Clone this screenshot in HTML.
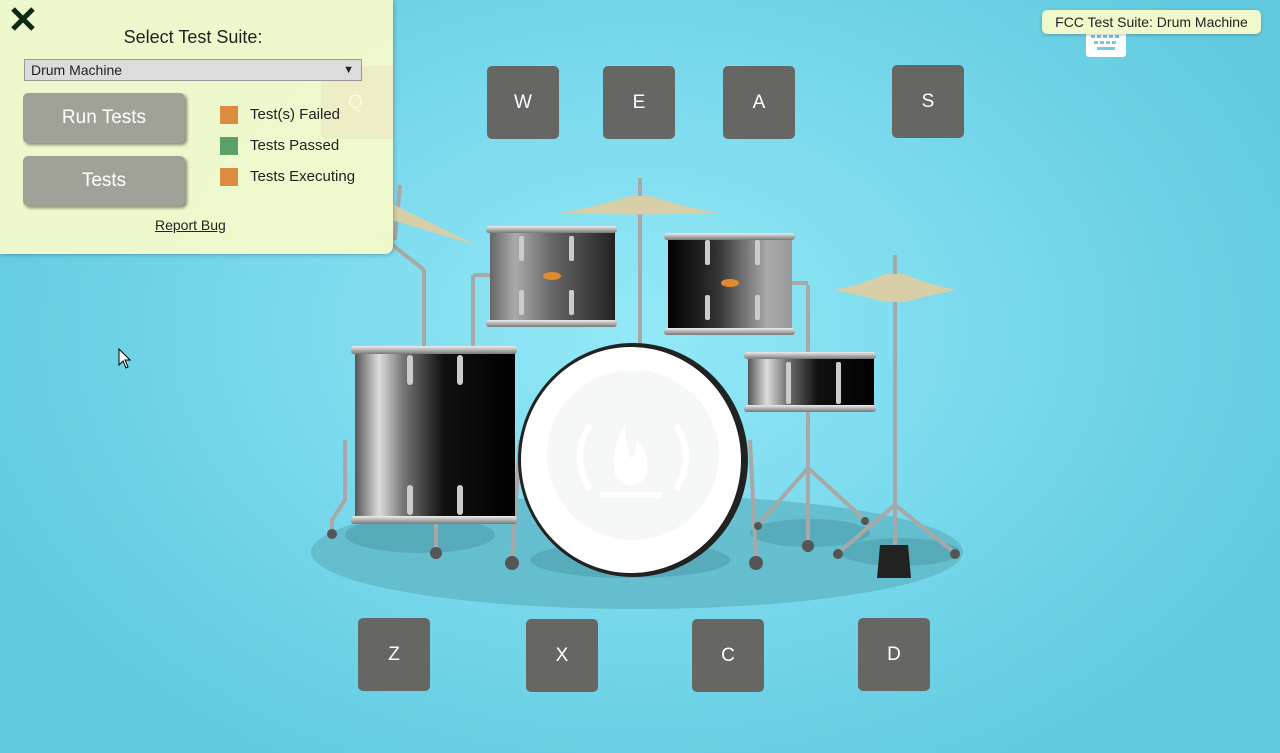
<!DOCTYPE html>
<html><head><meta charset="utf-8">
<style>
html,body{margin:0;padding:0;width:1280px;height:753px;overflow:hidden;font-family:"Liberation Sans",sans-serif;}
body{background:radial-gradient(ellipse 700px 500px at 640px 330px,#93e9f6 0%,#7ddbee 45%,#62cbe0 100%);position:relative;}
.key{position:absolute;width:72px;height:73px;background:#666664;border-radius:5px;color:#fff;font-size:19px;display:flex;align-items:center;justify-content:center;}
#panel{position:absolute;left:0;top:0;width:393px;height:254px;background:rgba(242,250,203,0.97);border-bottom-right-radius:8px;box-shadow:1px 1px 4px rgba(0,0,0,.25);overflow:hidden;}
.btn{position:absolute;left:23px;width:162px;height:50px;background:#a0a297;border-radius:5px;box-shadow:2px 2px 3px rgba(0,0,0,.45);color:#fff;font-size:19px;display:flex;align-items:center;justify-content:center;}
.leg{position:absolute;left:220px;font-size:15px;color:#222;}
.leg i{position:absolute;left:0;top:0;width:18px;height:18px;}
.leg span{position:absolute;left:30px;top:0;white-space:nowrap;}
</style></head><body>

<svg width="1280" height="753" style="position:absolute;left:0;top:0">
<defs>
<linearGradient id="sh" x1="0" x2="1">
<stop offset="0" stop-color="#555"/><stop offset=".15" stop-color="#ddd"/><stop offset=".3" stop-color="#777"/><stop offset=".55" stop-color="#111"/><stop offset="1" stop-color="#000"/></linearGradient>
<linearGradient id="sh2" x1="0" x2="1">
<stop offset="0" stop-color="#666"/><stop offset=".2" stop-color="#aaa"/><stop offset=".5" stop-color="#666"/><stop offset="1" stop-color="#222"/></linearGradient>
<linearGradient id="sh3" x1="0" x2="1">
<stop offset="0" stop-color="#000"/><stop offset=".4" stop-color="#333"/><stop offset=".8" stop-color="#aaa"/><stop offset="1" stop-color="#999"/></linearGradient>
<linearGradient id="rim" x1="0" y1="0" x2="0" y2="1"><stop offset="0" stop-color="#eee"/><stop offset="1" stop-color="#777"/></linearGradient>
</defs>
<ellipse cx="637" cy="552" rx="326" ry="57" fill="#5fb6c4" opacity=".75"/>
<ellipse cx="420" cy="535" rx="75" ry="18" fill="#4f9fac" opacity=".6"/>
<ellipse cx="630" cy="560" rx="100" ry="18" fill="#4f9fac" opacity=".6"/>
<ellipse cx="810" cy="533" rx="60" ry="14" fill="#4f9fac" opacity=".6"/>
<ellipse cx="900" cy="552" rx="60" ry="14" fill="#4f9fac" opacity=".6"/>
<g stroke="#a8a8a8" stroke-width="4" fill="none">
<line x1="640" y1="178" x2="640" y2="345"/>
<line x1="895" y1="255" x2="895" y2="560"/>
<line x1="808" y1="285" x2="808" y2="545"/>
<line x1="808" y1="468" x2="758" y2="525"/><line x1="808" y1="468" x2="865" y2="520"/>
<line x1="895" y1="505" x2="838" y2="553"/><line x1="895" y1="505" x2="955" y2="553"/>
<line x1="424" y1="270" x2="424" y2="350"/><line x1="424" y1="270" x2="380" y2="235"/>
<line x1="473" y1="275" x2="473" y2="350"/><line x1="473" y1="275" x2="490" y2="275"/>
<line x1="775" y1="283" x2="808" y2="283"/>
<line x1="400" y1="185" x2="395" y2="240"/>
<line x1="436" y1="420" x2="436" y2="552"/>
<line x1="520" y1="440" x2="512" y2="560"/><line x1="750" y1="440" x2="756" y2="560"/>
<polyline points="345,440 345,500 332,520 332,533"/>
</g>
<g fill="#555"><circle cx="332" cy="534" r="5"/><circle cx="436" cy="553" r="6"/><circle cx="512" cy="563" r="7"/><circle cx="756" cy="563" r="7"/><circle cx="808" cy="546" r="6"/><circle cx="838" cy="554" r="5"/><circle cx="955" cy="554" r="5"/><circle cx="758" cy="526" r="4"/><circle cx="865" cy="521" r="4"/></g>
<path d="M880 545 h28 l3 33 h-34z" fill="#222"/>
<path d="M560 213 Q600 206 630 196 L650 196 Q680 206 718 213 Q640 216 560 213z" fill="#d8cfa8"/>
<path d="M833 290 Q865 284 885 274 L905 274 Q925 284 957 290 Q925 296 905 302 L885 302 Q865 296 833 290z" fill="#d8cfa8"/>
<path d="M380 198 L476 245 L392 220z" fill="#d8cfa8"/>
<rect x="490" y="230" width="125" height="95" fill="url(#sh2)"/>
<rect x="486" y="226" width="131" height="7" rx="3" fill="url(#rim)"/><rect x="486" y="320" width="131" height="7" rx="3" fill="url(#rim)"/>
<ellipse cx="552" cy="276" rx="9" ry="4" fill="#e0892f"/>
<rect x="668" y="237" width="124" height="95" fill="url(#sh3)"/>
<rect x="664" y="233" width="131" height="7" rx="3" fill="url(#rim)"/><rect x="664" y="328" width="131" height="7" rx="3" fill="url(#rim)"/>
<ellipse cx="730" cy="283" rx="9" ry="4" fill="#e0892f"/>
<rect x="355" y="352" width="160" height="168" fill="url(#sh)"/>
<rect x="351" y="346" width="166" height="8" rx="3" fill="url(#rim)"/><rect x="351" y="516" width="166" height="8" rx="3" fill="url(#rim)"/>
<rect x="748" y="358" width="126" height="50" fill="url(#sh)"/>
<rect x="744" y="352" width="132" height="7" rx="3" fill="url(#rim)"/><rect x="744" y="405" width="132" height="7" rx="3" fill="url(#rim)"/>
<g fill="#ccc"><rect x="407" y="355" width="6" height="30" rx="3"/><rect x="457" y="355" width="6" height="30" rx="3"/><rect x="407" y="485" width="6" height="30" rx="3"/><rect x="457" y="485" width="6" height="30" rx="3"/>
<rect x="519" y="236" width="5" height="25" rx="2"/><rect x="569" y="236" width="5" height="25" rx="2"/><rect x="519" y="290" width="5" height="25" rx="2"/><rect x="569" y="290" width="5" height="25" rx="2"/>
<rect x="705" y="240" width="5" height="25" rx="2"/><rect x="755" y="240" width="5" height="25" rx="2"/><rect x="705" y="295" width="5" height="25" rx="2"/><rect x="755" y="295" width="5" height="25" rx="2"/>
<rect x="786" y="362" width="5" height="42" rx="2"/><rect x="836" y="362" width="5" height="42" rx="2"/></g>
<ellipse cx="633" cy="460" rx="115" ry="117" fill="#222"/>
<ellipse cx="631" cy="460" rx="110" ry="113" fill="#fff"/>
<ellipse cx="633" cy="455" rx="86" ry="85" fill="#f6f8f8"/>
<g fill="none" stroke="#fff" stroke-width="6"><path d="M590 425 Q570 455 590 490"/><path d="M676 425 Q696 455 676 490"/></g>
<path d="M625 425 Q610 450 615 475 Q630 495 645 478 Q652 455 637 440 Q637 455 630 458 Q625 440 625 425z" fill="#fff"/>
<rect x="600" y="492" width="62" height="6" fill="#fff"/>
</svg>

<div class="key" style="left:487px;top:66px">W</div>
<div class="key" style="left:603px;top:66px">E</div>
<div class="key" style="left:723px;top:66px">A</div>
<div class="key" style="left:892px;top:65px">S</div>
<div class="key" style="left:358px;top:618px">Z</div>
<div class="key" style="left:526px;top:619px">X</div>
<div class="key" style="left:692px;top:619px">C</div>
<div class="key" style="left:858px;top:618px">D</div>

<div id="panel">
<div style="position:absolute;left:321px;top:66px;width:80px;height:73px;background:#eeeec6;border-radius:5px;color:#fafae2;font-size:19px;line-height:73px;text-indent:27px">Q</div>
<svg width="26" height="26" style="position:absolute;left:10px;top:6px"><path d="M3 3L23 23M23 3L3 23" stroke="#0e2a14" stroke-width="5"/></svg>
<div style="position:absolute;left:0;width:386px;top:27px;text-align:center;font-size:18px;color:#222">Select Test Suite:</div>
<div style="position:absolute;left:24px;top:59px;width:336px;height:20px;background:#dcdcdc;border:1px solid #999;font-size:14px;color:#222;line-height:20px;text-indent:6px">Drum Machine<span style="position:absolute;right:7px;top:0;font-size:11px">▼</span></div>
<div class="btn" style="top:93px">Run Tests</div>
<div class="btn" style="top:156px">Tests</div>
<div class="leg" style="top:106px"><i style="background:#dc8b3f"></i><span>Test(s) Failed</span></div>
<div class="leg" style="top:137px"><i style="background:#5ba06a"></i><span>Tests Passed</span></div>
<div class="leg" style="top:168px"><i style="background:#dc8b3f"></i><span>Tests Executing</span></div>
<div style="position:absolute;left:155px;top:217px;font-size:14px;color:#222;text-decoration:underline">Report Bug</div>
</div>

<div style="position:absolute;left:1086px;top:28px;width:40px;height:29px;background:#fff;border-radius:3px"></div>
<svg width="40" height="29" style="position:absolute;left:1086px;top:28px"><g fill="#6fcbe0"><rect x="5" y="7" width="4" height="3"/><rect x="11" y="7" width="4" height="3"/><rect x="17" y="7" width="4" height="3"/><rect x="23" y="7" width="4" height="3"/><rect x="29" y="7" width="4" height="3"/><rect x="8" y="13" width="4" height="3"/><rect x="14" y="13" width="4" height="3"/><rect x="20" y="13" width="4" height="3"/><rect x="26" y="13" width="4" height="3"/><rect x="11" y="19" width="18" height="3"/></g></svg>
<div style="position:absolute;left:1042px;top:10px;width:219px;height:24px;background:#f1f8cb;border-radius:5px;box-shadow:0 1px 3px rgba(0,0,0,.25);font-size:14px;color:#222;line-height:24px;text-align:center">FCC Test Suite: Drum Machine</div>

<svg width="14" height="22" style="position:absolute;left:118px;top:348px"><path d="M1 1 L1 17 L5 13 L8 20 L10 19 L7 12 L12 12 Z" fill="#fff" stroke="#000" stroke-width="1"/></svg>
</body></html>
